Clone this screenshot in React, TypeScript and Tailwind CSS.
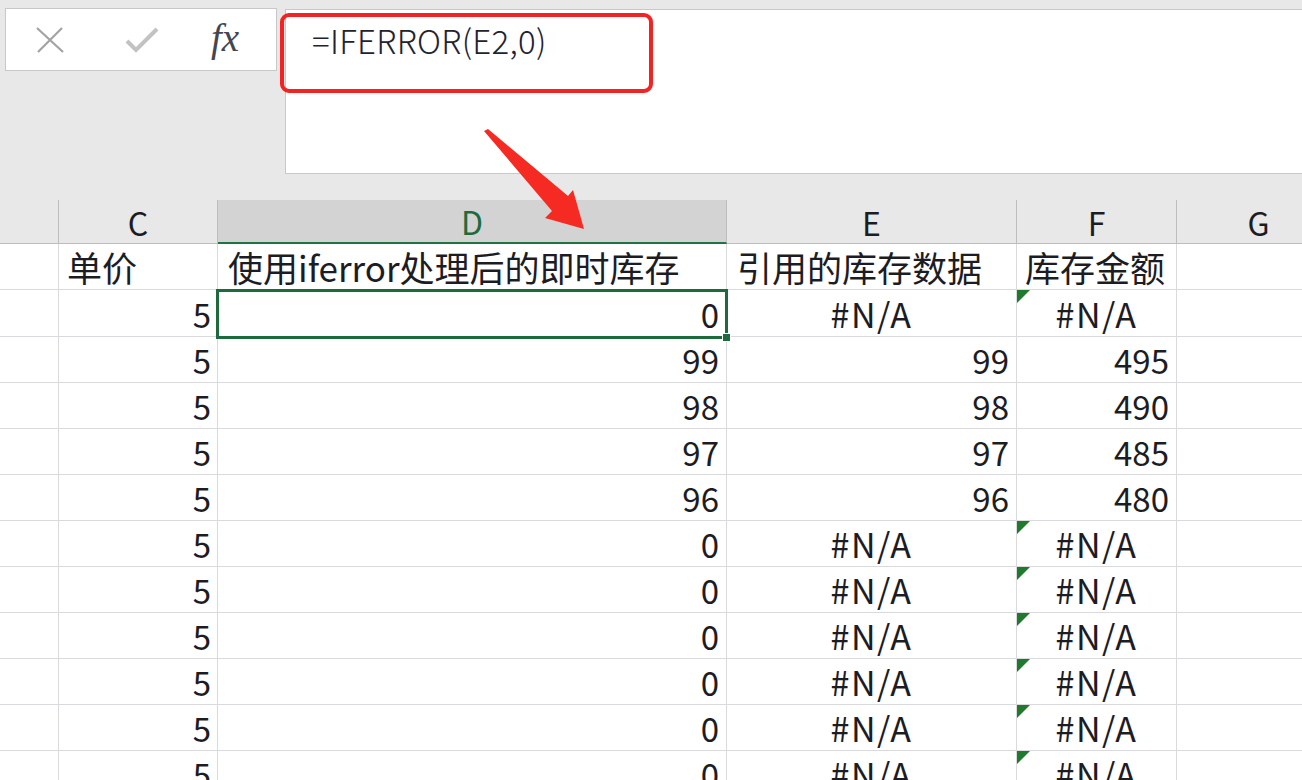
import React from 'react';

const FONT = { fontFamily: '"Noto Sans CJK SC", "Noto Sans", sans-serif' };

type Row = { c: string; d: string; e: string; f: string; na: boolean };

const ROWS: Row[] = [
  { c: '5', d: '0', e: '#N/A', f: '#N/A', na: true },
  { c: '5', d: '99', e: '99', f: '495', na: false },
  { c: '5', d: '98', e: '98', f: '490', na: false },
  { c: '5', d: '97', e: '97', f: '485', na: false },
  { c: '5', d: '96', e: '96', f: '480', na: false },
  { c: '5', d: '0', e: '#N/A', f: '#N/A', na: true },
  { c: '5', d: '0', e: '#N/A', f: '#N/A', na: true },
  { c: '5', d: '0', e: '#N/A', f: '#N/A', na: true },
  { c: '5', d: '0', e: '#N/A', f: '#N/A', na: true },
  { c: '5', d: '0', e: '#N/A', f: '#N/A', na: true },
  { c: '5', d: '0', e: '#N/A', f: '#N/A', na: true },
];

const GRID = 'grid w-[1340px] grid-cols-[59px_159px_509px_290px_160px_163px]';
const CELL = 'relative border-b border-r border-[#d9d9de] bg-white flex items-end pb-[5px] text-[33px] leading-none text-[#1c1c24]';

const Triangle = () => (
  <div className="absolute left-0 top-0 w-0 h-0 border-t-[13px] border-r-[13px] border-t-[#1f7a2e] border-r-transparent" />
);

const App = () => {
  return (
    <div className="relative w-[1302px] h-[780px] overflow-hidden bg-[#e8e8e8]" style={FONT}>
      {/* formula bar area */}
      <div className="flex h-[200px]">
        <div className="ml-[5px] mt-[8px] w-[272px] h-[63px] shrink-0 bg-white border border-[#c8c8c8] flex items-center">
          <svg width="30" height="28" viewBox="0 0 30 28" className="ml-[29px]">
            <path d="M2 2 L28 26 M27 2 L3 26" stroke="#a3a3a3" strokeWidth="2.2" fill="none" />
          </svg>
          <svg width="34" height="26" viewBox="0 0 34 26" className="ml-[60px]">
            <path d="M2 14 L11 23 L32 2" stroke="#c2c2c2" strokeWidth="4" fill="none" />
          </svg>
          <span
            className="ml-[52px] text-[39px] italic text-[#45454f] leading-none -mt-[4px]"
            style={{ fontFamily: '"Liberation Serif", "DejaVu Serif", serif' }}
          >
            fx
          </span>
        </div>
        <div className="ml-[8px] mt-[9px] flex-1 h-[165px] bg-white border-y border-l border-[#c8c8c8] pl-[26px] pt-[14px]">
          <div className="text-[33px] font-light leading-none text-[#23232e] tracking-[0.3px]">=IFERROR(E2,0)</div>
        </div>
      </div>

      {/* column headers */}
      <div className={`${GRID} h-[44px] text-[32px] leading-none`}>
        <div className="border-r border-b border-[#bdbdbd]" />
        <div className="flex items-center justify-center border-r border-b border-[#bdbdbd] text-[#1c1c24]">C</div>
        <div className="flex items-center justify-center bg-[#d3d3d3] border-r border-[#bdbdbd] border-b-[2px] border-b-[#217346] text-[#1e6b3e]">D</div>
        <div className="flex items-center justify-center border-r border-b border-[#bdbdbd] text-[#1c1c24]">E</div>
        <div className="flex items-center justify-center border-r border-b border-[#bdbdbd] text-[#1c1c24]">F</div>
        <div className="flex items-center justify-center border-b border-[#bdbdbd] text-[#1c1c24]">G</div>
      </div>

      {/* title row */}
      <div className={`${GRID} h-[46px]`}>
        <div className={CELL} />
        <div className={`${CELL} pl-[8px] text-[35px]`}>单价</div>
        <div className={`${CELL} pl-[10px] text-[35px]`}>使用iferror处理后的即时库存</div>
        <div className={`${CELL} pl-[10px] text-[35px]`}>引用的库存数据</div>
        <div className={`${CELL} pl-[8px] text-[35px]`}>库存金额</div>
        <div className={CELL} />
      </div>

      {/* data rows */}
      {ROWS.map((r, i) => (
        <div key={i} className={`${GRID} ${i === 0 ? 'h-[47px]' : 'h-[46px]'}`}>
          <div className={CELL} />
          <div className={`${CELL} justify-end pr-[6px]`}>{r.c}</div>
          <div className={`${CELL} justify-end pr-[7px] ${i === 0 ? 'z-10' : ''}`}>
            {r.d}
            {i === 0 && (
              <>
                <div className="absolute -left-[2px] -top-[1px] -right-[2px] -bottom-[3px] border-[3px] border-[#1d6b3c] pointer-events-none" />
                <div className="absolute -right-[5px] -bottom-[6px] w-[9px] h-[9px] bg-[#1d6b3c] border border-white" />
              </>
            )}
          </div>
          <div className={`${CELL} ${r.na ? 'justify-center tracking-[1.5px] text-[34px]' : 'justify-end pr-[7px]'}`}>{r.e}</div>
          <div className={`${CELL} ${r.na ? 'justify-center tracking-[1.5px] text-[34px]' : 'justify-end pr-[7px]'}`}>
            {r.na && <Triangle />}
            {r.f}
          </div>
          <div className={CELL} />
        </div>
      ))}

      {/* annotation overlays */}
      <div className="absolute left-[280px] top-[13px] w-[373px] h-[80px] rounded-[9px] border-[4px] border-[#f42323]" />
      <svg className="absolute left-0 top-0 z-20" width="1302" height="780" viewBox="0 0 1302 780">
        <polygon points="484,131 488,129 568,196 573,190 584,229 545,218 552,211" fill="#f52a22" />
      </svg>
    </div>
  );
};

export default App;
